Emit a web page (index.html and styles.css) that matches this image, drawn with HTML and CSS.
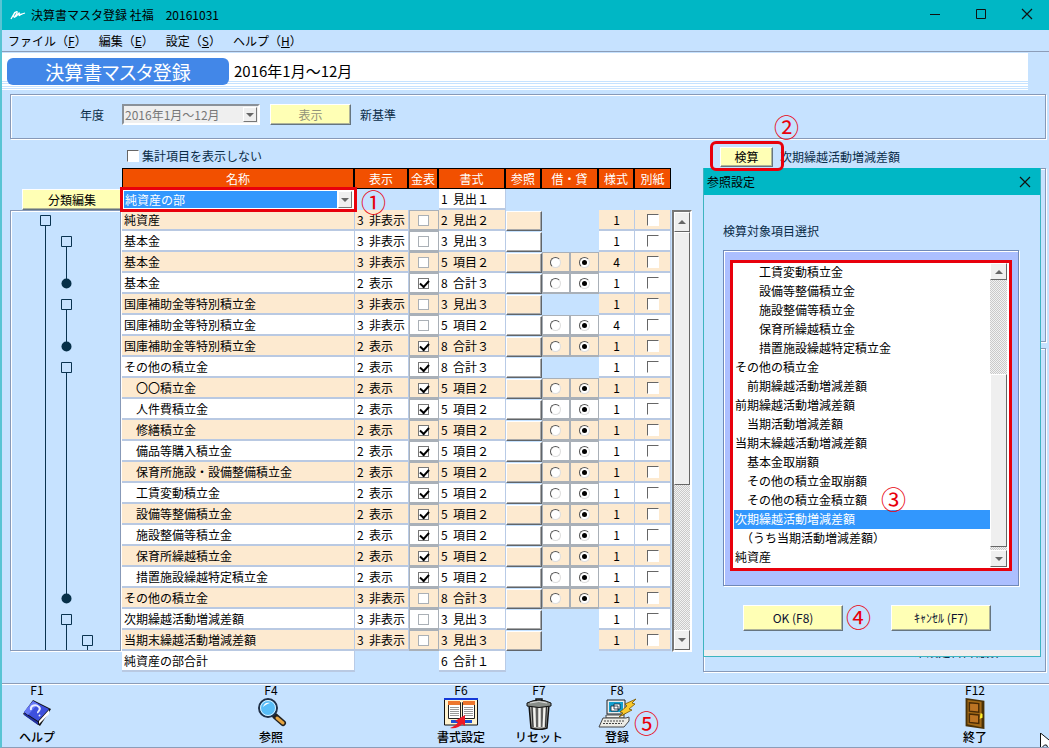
FILE: index.html
```html
<!DOCTYPE html>
<html lang="ja">
<head>
<meta charset="utf-8">
<title>決算書マスタ登録 社福</title>
<link rel="stylesheet" href="styles.css">
</head>
<body>
<div class="window">
  <header class="titlebar">
    <svg class="app-icon" width="16" height="12" viewBox="0 0 16 12"><path d="M1 10 5 3M3 8C4 3 8 1 7 4S3 9 5 8 8 5 9 4 8 8 10 6 11 6 12 5L15 4" fill="none" stroke="#fff" stroke-width="1.3"/></svg>
    <h1 class="app-title">決算書マスタ登録 社福　20161031</h1>
    <div class="window-buttons">
      <button type="button" aria-label="最小化"><svg width="12" height="12" viewBox="0 0 12 12"><path d="M1 6.5h10" stroke="#111"/></svg></button>
      <button type="button" aria-label="最大化"><svg width="12" height="12" viewBox="0 0 12 12"><path d="M1.500 1.500h9v9h-9z" fill="none" stroke="#111"/></svg></button>
      <button type="button" aria-label="閉じる"><svg width="12" height="12" viewBox="0 0 12 12"><path d="M1 1l10 10M11 1L1 11" stroke="#111" stroke-width="1.200"/></svg></button>
    </div>
  </header>

  <nav class="menubar">
    <button type="button">ファイル（<u>F</u>）</button>
    <button type="button">編集（<u>E</u>）</button>
    <button type="button">設定（<u>S</u>）</button>
    <button type="button">ヘルプ（<u>H</u>）</button>
  </nav>

  <div class="heading">
    <h2 class="heading-name">決算書マスタ登録</h2>
    <span class="heading-period">2016年1月～12月</span>
  </div>

  <section class="filter etched">
    <label class="filter-label" for="year">年度</label>
    <span class="combo combo-year">
      <select id="year" disabled><option>2016年1月～12月</option></select>
      <i class="combo-arrow"></i>
    </span>
    <button type="button" class="btn btn-show" disabled>表示</button>
    <span class="filter-note">新基準</span>
  </section>

  <main class="main">
    <section class="items">
      <label class="hide-total"><input type="checkbox" class="sunken-check">集計項目を表示しない</label>
      <div class="items-grid">
        <div class="side">
          <button type="button" class="btn btn-edit">分類編集</button>
          <div class="tree etched">
            <svg width="110" height="439" viewBox="0 0 110 439">
              <g fill="none" stroke="#0a3350">
                <path d="M34.500 15V439M55.500 36V69M55.500 99V132M55.500 162V385M55.500 414V439M76.500 435V439"/>
                <path fill="#c6e2ff" d="M29.500 4.500h10v10h-10zM50.500 25.500h10v10h-10zM50.500 88.500h10v10h-10zM50.500 151.500h10v10h-10zM50.500 403.500h10v10h-10zM71.500 424.500h10v10h-10z"/>
              </g>
              <g fill="#062f48"><circle cx="55.500" cy="72.500" r="5"/><circle cx="55.500" cy="135.500" r="5"/><circle cx="55.500" cy="387.500" r="5"/></g>
            </svg>
          </div>
        </div>
        <table class="items-table">
          <colgroup><col><col class="c-show"><col class="c-amt"><col class="c-fmt"><col class="c-ref"><col class="c-dr"><col class="c-cr"><col class="c-form"><col class="c-form"></colgroup>
          <thead>
            <tr><th>名称</th><th>表示</th><th>金表</th><th>書式</th><th>参照</th><th colspan="2">借・貸</th><th>様式</th><th>別紙</th></tr>
          </thead>
          <tbody id="rows">
            <tr class="group-row">
              <td class="group-cell">
                <span class="combo combo-group">
                  <select aria-label="分類"><option>純資産の部</option></select>
                  <i class="combo-arrow"></i>
                </span>
              </td>
              <td></td><td></td><td class="cell"><span class="code">1</span>見出１</td><td></td><td></td><td></td><td></td><td></td>
            </tr>
          </tbody>
          <tfoot>
            <tr><td class="cell">純資産の部合計</td><td></td><td></td><td class="cell"><span class="code">6</span>合計１</td><td></td><td></td><td></td><td></td><td></td></tr>
          </tfoot>
        </table>
        <div class="scroll scroll-table"><i class="scroll-btn up"></i><i class="scroll-thumb"></i><i class="scroll-track"></i><i class="scroll-btn down"></i></div>
      </div>
      <span class="mark mark-1">①</span>
    </section>

    <section class="check">
      <div class="check-head">
        <button type="button" class="btn btn-check">検算</button>
        <span class="check-target">次期繰越活動増減差額</span>
        <span class="check-ring"></span>
        <span class="mark mark-2">②</span>
      </div>
      <div class="panel panel-top etched"></div>
      <div class="panel panel-bottom etched"><span>未設定科目総数</span><span>0&nbsp; 0</span></div>

      <div class="dialog" role="dialog" aria-labelledby="dlg-title">
        <div class="dialog-title">
          <h3 id="dlg-title">参照設定</h3>
          <button type="button" aria-label="閉じる"><svg width="12" height="12" viewBox="0 0 12 12"><path d="M1 1l10 10M11 1L1 11" stroke="#111" stroke-width="1.200"/></svg></button>
        </div>
        <div class="dialog-body">
          <label class="dialog-label" for="target">検算対象項目選択</label>
          <div class="list-panel">
            <div class="list-frame">
              <select id="target" size="16">
                <option>　　工賃変動積立金</option>
                <option>　　設備等整備積立金</option>
                <option>　　施設整備等積立金</option>
                <option>　　保育所繰越積立金</option>
                <option>　　措置施設繰越特定積立金</option>
                <option>その他の積立金</option>
                <option>　前期繰越活動増減差額</option>
                <option>前期繰越活動増減差額</option>
                <option>　当期活動増減差額</option>
                <option>当期末繰越活動増減差額</option>
                <option>　基本金取崩額</option>
                <option>　その他の積立金取崩額</option>
                <option>　その他の積立金積立額</option>
                <option selected>次期繰越活動増減差額</option>
                <option>　（うち当期活動増減差額）</option>
                <option>純資産</option>
              </select>
              <div class="scroll scroll-list"><i class="scroll-btn up"></i><i class="scroll-track"></i><i class="scroll-thumb"></i><i class="scroll-btn down"></i></div>
            </div>
            <span class="mark mark-3">③</span>
          </div>
          <div class="dialog-actions">
            <button type="button" class="btn btn-dialog">OK (F8)</button>
            <button type="button" class="btn btn-dialog">ｷｬﾝｾﾙ (F7)</button>
            <span class="mark mark-4">④</span>
          </div>
        </div>
      </div>
    </section>
  </main>

  <footer class="keys">
    <div class="key-group">
      <button type="button" class="key"><span>F1</span>
        <svg width="32" height="32" viewBox="0 0 32 32"><path d="M12 2 30 11 19 28 2 16z" fill="#111"/><path d="M12 3 28 11 17 23 3 14z" fill="#3d50dd"/><path d="M12 3 3 14l4 3L17 6z" fill="#6678f5"/><path d="M28 12v4L18 26v-3z" fill="#fff"/><path d="M3 15 17 24v3L3 17z" fill="#2231a0"/><path d="M10 12C9 7 15 6 18 9s-2 4-1 6M18 17l1 1" fill="none" stroke="#e8ecff" stroke-width="2"/></svg>
        <b>ヘルプ</b></button>
      <i></i><i></i>
      <button type="button" class="key"><span>F4</span>
        <svg width="32" height="32" viewBox="0 0 32 32"><path d="M20 18 28 25" stroke="#222" stroke-width="6" stroke-linecap="round"/><path d="M22 20 28 25" stroke="#e6a440" stroke-width="3" stroke-linecap="round"/><circle cx="13" cy="10" r="9" fill="#58bdf7" stroke="#203047" stroke-width="2"/><circle cx="13" cy="10" r="7.500" fill="none" stroke="#d7f1ff"/><path d="M8 9c1-4 4-5 7-4-3 1-5 2-7 4z" fill="#fff"/></svg>
        <b>参照</b></button>
    </div>
    <div class="key-group">
      <i></i>
      <button type="button" class="key"><span>F6</span>
        <svg width="36" height="32" viewBox="0 0 36 32"><path d="M1.500 1h33v26h-33z" fill="#fff3cf" stroke="#111"/><path d="M1 0h34v2H1z" fill="#1438d8"/><path d="M5.500 4.500h12v16h-12zM19.500 4.500h12v16h-12z" fill="#fff" stroke="#222"/><path d="M5 3h12v4H5zM20 3h12v4H20z" fill="#ed762d"/><path d="M7 9.500h9M7 11.500h9M7 13.500h9M7 15.500h9M7 17.500h9M21 9.500h9M21 11.500h9M21 13.500h9M21 15.500h9M21 17.500h9" stroke="#999"/><path d="M8 22h21v3H8z" fill="#1b50d8"/><path d="M22 17v11l-3-2c-2 3-7 5-12 4 5-2 7-4 8-6l-3-1z" fill="#ee1826"/></svg>
        <b>書式設定</b></button>
      <button type="button" class="key"><span>F7</span>
        <svg width="32" height="32" viewBox="0 0 32 32"><path d="M6 7h20l-2 23q-8 3-16 0z" fill="#a7a7a2" stroke="#111" stroke-width="1.500"/><path d="M9 9l1 20M14 9v20M19 9v20M23.500 9l-1 20" stroke="#333" stroke-width="1.200"/><path d="M11 9l1 20M16.500 9v20M21.500 9l-1 20" stroke="#f4f4f0" stroke-width="2"/><path d="M4 5q12-6 24 0v3q-12 3-24 0z" fill="#888d88" stroke="#111"/><path d="M13 3V1h6v2" fill="none" stroke="#111" stroke-width="1.500"/><path d="M7 5q9-3 17 0" stroke="#ddd" fill="none"/></svg>
        <b>リセット</b></button>
      <button type="button" class="key"><span>F8</span>
        <svg width="40" height="32" viewBox="0 0 40 32"><path d="M10 2h18v14H10z" fill="#e8edf0" stroke="#222"/><path d="M12 4h14v10H12z" fill="#139fce"/><path d="M14 8h7v5h-7zM17 6h6v5h-6z" fill="#fff" stroke="#123" stroke-width=".8"/><path d="M9 17h18v3H9z" fill="#f4f4f0" stroke="#444"/><path d="M6 20h23l3-1v4l-5 6H2z" fill="#ecece6" stroke="#444"/><path d="M7 23h20M6 25.500h19" stroke="#444" stroke-dasharray="2 1"/><path d="M39 1 28 6l2 2-7 6 3 1-4 4 13-7-3-1 6-5-3-1z" fill="#fac92b" stroke="#765400" stroke-width=".8"/></svg>
        <b>登録</b></button>
      <span class="mark mark-5">⑤</span>
    </div>
    <div class="key-group key-group-end">
      <i></i><i></i><i></i>
      <button type="button" class="key"><span>F12</span>
        <svg width="32" height="34" viewBox="0 0 32 34"><path d="M6 0 26 3v30L6 30z" fill="#4a3106"/><path d="M8 2 23 4v27L8 28z" fill="#a36a17"/><path d="M10 5 20 6v9L10 14zM10 17l10 1v9L10 26z" fill="#bc7423" stroke="#4a2b05" stroke-width="1.500"/><path d="M22 16l2 1v4l-3 1z" fill="#fff02a"/></svg>
        <b>終了</b></button>
    </div>
  </footer>
  <svg class="cursor" width="9" height="14" viewBox="0 0 9 14"><path d="M.5 0v16l4-4h2l2 4 3-2V9z" fill="#fff" stroke="#111"/></svg>
</div>
<script src="rows.js"></script>
</body>
</html>
```
FILE: styles.css
```css
* { box-sizing: border-box; }
body {
  margin: 0;
  background: #fff;
  color: #000;
  font: 12px/16px "Noto Sans CJK JP", "Liberation Sans", sans-serif;
}
button, select, input { font: inherit; color: inherit; margin: 0; }
button { border: 0; padding: 0; background: none; }
h1, h2, h3 { margin: 0; font-weight: 400; }
.window {
  position: relative;
  background: #c6e2ff;
  border-left: 2px solid #58c4d4;
  border-bottom: 1px solid #8c9db8;
  overflow: hidden;
}

.titlebar {
  display: flex;
  align-items: center;
  gap: 5px;
  height: 30px;
  margin-left: -2px;
  padding-left: 10px;
  background: #00b7c5;
}
.app-title { flex: 1; font-size: 12px; line-height: 28px; }
.window-buttons { display: flex; padding: 0 16px 2px 0; gap: 34px; }
.window-buttons button { width: 12px; height: 12px; line-height: 0; }

.menubar {
  display: flex;
  gap: 12px;
  height: 22px;
  padding-left: 6px;
  border-bottom: 1px solid #8c9db8;
}
.menubar button { line-height: 22px; }

.heading {
  display: flex;
  align-items: flex-start;
  gap: 5px;
  height: 38px;
  margin: 1px 21px 0 0;
  padding: 5px 0 0 5px;
  background: linear-gradient(#fff 28px, #c6e2ff 28px, #c6e2ff 29px, #fff 29px, #fff 30px, #c6e2ff 30px, #c6e2ff 31px, #fff 31px, #fff 33px, #c6e2ff 33px, #c6e2ff 34px, #fff 34px, #fff 35px, #c6e2ff 35px, #c6e2ff 36px, #fff 36px, #fff 37px, #c6e2ff 37px);
}
.heading-name {
  width: 222px;
  border-radius: 6px;
  background: #4287e8;
  color: #fff;
  font-size: 19px;
  line-height: 27px;
  text-align: center;
  font-feature-settings: "palt";
}
.heading-period { font-size: 15px; line-height: 26px; }

.etched { border: 1px solid #8799b8; box-shadow: 1px 1px 0 #fff, inset 1px 1px 0 #fff; }

.filter {
  display: flex;
  align-items: center;
  height: 45px;
  margin: 3px 3px 0 8px;
  padding: 0 0 4px 69px;
}
.filter-label { width: 42px; color: #0a2c48; }
.filter-note { margin-left: 9px; color: #0a2c48; }

.combo { position: relative; display: block; }
.combo select {
  appearance: none;
  display: block;
  width: 100%;
  height: 100%;
  border: 0;
  border-radius: 0;
  padding: 0 2px;
  opacity: 1;
}
.combo-arrow {
  position: absolute;
  top: 1px;
  right: 1px;
  bottom: 1px;
  width: 14px;
  display: grid;
  place-items: center;
  background: #efefef;
  border: 1px solid;
  border-color: #fff #777 #777 #fff;
  pointer-events: none;
}
.combo-arrow::before, .scroll-btn::before {
  content: "";
  border: 4px solid transparent;
  border-top-color: #666;
  border-bottom: 0;
}
.combo-year {
  width: 138px;
  height: 21px;
  border: 2px solid;
  border-color: #8a9199 #fff #fff #8a9199;
  background: #efefef;
}
.combo-year select { padding: 0 1px; background: #efefef; color: #777; }

.btn {
  background: #ffffb5;
  border: 1px solid;
  border-color: #fff #667580 #667580 #fff;
  box-shadow: inset -1px -1px 0 #b0b59a;
  line-height: 18px;
}
.btn-show { width: 81px; height: 21px; margin-left: 10px; color: #92947a; }

.main { display: flex; gap: 11px; padding: 8px 3px 11px 8px; }
.items { position: relative; flex: 1; min-width: 0; }
.hide-total { display: flex; align-items: center; gap: 3px; height: 18px; margin: 0 0 3px 117px; color: #0a2c48; }
.sunken-check {
  appearance: none;
  width: 12px;
  height: 12px;
  background: #fff;
  border: 1px solid;
  border-color: #666 #fff #fff #666;
}
.items-grid { display: grid; grid-template-columns: 112px minmax(0, 1fr) 21px; }
.side { display: flex; flex-direction: column; padding-top: 21px; }
.btn-edit { height: 21px; margin-left: 12px; border-right-color: #ffffb5; }
.tree { width: 111px; height: 441px; line-height: 0; }

.items-table { width: 100%; table-layout: fixed; border-collapse: separate; border-spacing: 0; }
.c-show { width: 54px; }
.c-amt { width: 30px; }
.c-fmt { width: 67px; }
.c-ref { width: 36px; }
.c-dr { width: 28px; }
.c-cr { width: 29px; }
.c-form { width: 36px; }
.items-table th {
  height: 21px;
  padding: 0;
  border: 1px solid #000;
  border-left-width: 0;
  border-right-width: 2px;
  background: #f25000;
  color: #fff;
  font-weight: 400;
  line-height: 19px;
}
.items-table th:first-child { border-left-width: 1px; }
.items-table th:last-child { border-right-width: 1px; }
.items-table td { height: 21px; padding: 0; line-height: 18px; white-space: nowrap; }
.items-table .cell { padding: 0 2px; background: #fff; border-right: 1px solid #b9cbe6; border-bottom: 2px solid #b9c9e2; }
.items-table .mid { text-align: center; }
.items-table .boxed { background: #fff; border: 1px solid #a9b0b8; border-bottom-width: 2px; line-height: 0; text-align: center; }
.ref { display: block; width: 100%; height: 20px; background: #fff; border: 1px solid; border-color: #fff #60656a #60656a #fff; box-shadow: inset -1px -1px 0 #aaa; }
.items-table .odd .cell, .items-table .odd .boxed, .odd .ref { background: #fdead0; }
.code { display: inline-block; width: 12px; }
.cell .sunken-check { display: block; margin: 0 auto; }
.amt {
  appearance: none;
  display: block;
  width: 11px;
  height: 11px;
  margin: 0 auto;
  background: #fff;
  border: 1px solid #aab0b6;
}
.amt:checked { border-color: #777; }
.amt:checked::before {
  content: "";
  display: block;
  width: 7px;
  height: 4px;
  margin: 1px;
  border: solid #000;
  border-width: 0 0 2px 2px;
  transform: rotate(-48deg);
}
.radio {
  appearance: none;
  display: grid;
  place-items: center;
  width: 11px;
  height: 11px;
  margin: 0 auto;
  border: 1px solid;
  border-color: #555 #ddd #ddd #555;
  border-radius: 50%;
  background: #fff;
}
.radio:checked::before { content: ""; width: 5px; height: 5px; border-radius: 50%; background: #000; }

.combo-group {
  height: 21px;
  border: 1px solid #777;
  background: #fff;
  outline: 3px solid #e8000c;
  outline-offset: -1px;
  z-index: 1;
}
.combo-group select {
  border: solid #fff;
  border-width: 1px 17px 1px 1px;
  padding: 0 1px;
  background: #3297fd;
  color: #fff;
}
.combo-group .combo-arrow { right: 2px; }

.scroll {
  display: flex;
  flex-direction: column;
  background: repeating-conic-gradient(#c9c9c9 0 25%, #f2f2f2 0 50%) 0 0 / 2px 2px;
}
.scroll-btn, .scroll-thumb { background: #efefef; border: 1px solid; border-color: #fff #666 #666 #fff; }
.scroll-btn { display: grid; place-items: center; flex: none; }
.scroll-btn.up::before { transform: rotate(180deg); }
.scroll-table { margin: 42px 0 20px 1px; border: 2px solid; border-color: #777 #fff #fff #777; }
.scroll-table .scroll-btn { height: 20px; }
.scroll-table .scroll-thumb { flex: 251; }
.scroll-table .scroll-track { flex: 145; }
.scroll-list { width: 17px; }
.scroll-list .scroll-btn { height: 17px; }
.scroll-list .scroll-track { flex: 95; }
.scroll-list .scroll-thumb { flex: 172; margin-bottom: 3px; }

.check { position: relative; flex: none; width: 343px; display: flex; flex-direction: column; }
.check-head { position: relative; display: flex; align-items: center; height: 21px; padding: 0 0 2px 17px; }
.btn-check { width: 53px; height: 20px; }
.check-target { margin-left: 7px; color: #0a2c48; }
.check-ring { position: absolute; left: 7px; top: -6px; width: 74px; height: 30px; border: 3px solid #e8000c; border-radius: 6px; z-index: 3; }
.panel-top { height: 174px; }
.panel-bottom { flex: 1; margin-top: 6px; display: flex; align-items: flex-end; justify-content: flex-end; gap: 20px; padding: 0 8px 11px 0; color: #0a2c48; }

.dialog { position: absolute; top: 21px; left: 0; right: 5px; border: 1px solid #3db4c0; background: #c6e2ff; border-top: 0; }
.dialog-title { display: flex; align-items: center; justify-content: space-between; height: 27px; padding: 0 9px 0 3px; background: #00b7c5; }
.dialog-title h3 { font-size: 12px; }
.dialog-title button { width: 12px; height: 12px; line-height: 0; }
.dialog-body { padding: 28px 21px 19px 19px; border-bottom: 6px solid #efefef; }
.dialog-label { display: block; color: #0a2c48; }
.list-panel { position: relative; margin-top: 11px; padding: 9px 6px 14px 6px; background: #acbfff; border: 1px solid #7089b8; box-shadow: 1px 1px 0 #fff, inset 1px 1px 0 #fff; }
.list-frame { display: flex; border: 3px solid #e8000c; background: #fff; padding: 0 2px 1px 1px; }
.list-frame select {
  flex: 1;
  min-width: 0;
  height: 304px;
  padding: 0;
  border: 0;
  outline: 0;
  background: #fff;
  overflow: hidden;
  scrollbar-width: none;
}
.list-frame option { height: 19px; min-height: 19px; padding: 0 1px; line-height: 19px; }
.list-frame option:checked { background: #3297fd linear-gradient(#3297fd, #3297fd); color: #fff; }
.dialog-actions { position: relative; display: flex; gap: 48px; padding: 19px 0 0 20px; }
.btn-dialog { width: 100px; height: 26px; line-height: 22px; color: #0a1030; }

.mark { position: absolute; z-index: 4; color: #e8000c; font-size: 25px; line-height: 26px; }
.mark-1 { left: 351px; top: 41px; }
.mark-2 { left: 71px; top: -34px; }
.mark-3 { left: 157px; top: 234px; }
.mark-4 { left: 123px; top: 17px; }
.mark-5 { right: -7px; top: 25px; }

.keys { display: flex; gap: 42px; height: 64px; padding-right: 39px; border-top: 1px solid #8c9db8; box-shadow: inset 0 1px 0 #fff; }
.key-group { position: relative; display: grid; grid-template-columns: repeat(4, 70px); gap: 8px; }
.key-group-end { margin-left: auto; }
.key { display: flex; flex-direction: column; align-items: center; }
.key span { height: 14px; line-height: 12px; }
.key svg { height: 32px; }
.key b { font-weight: 500; line-height: 14px; }
.cursor { position: absolute; right: 0; bottom: 0; }
```
FILE: rows.js
```js
// 名称, 表示, 金表, 書式, 借・貸の有無, 様式
const rows = [
  ["純資産", "3 非表示", 0, "2 見出２", 0, 1],
  ["基本金", "3 非表示", 0, "3 見出３", 0, 1],
  ["基本金", "3 非表示", 0, "5 項目２", 1, 4],
  ["基本金", "2 表示", 1, "8 合計３", 1, 1],
  ["国庫補助金等特別積立金", "3 非表示", 0, "3 見出３", 0, 1],
  ["国庫補助金等特別積立金", "3 非表示", 0, "5 項目２", 1, 4],
  ["国庫補助金等特別積立金", "2 表示", 1, "8 合計３", 1, 1],
  ["その他の積立金", "2 表示", 1, "8 合計３", 0, 1],
  ["　〇〇積立金", "2 表示", 1, "5 項目２", 1, 1],
  ["　人件費積立金", "2 表示", 1, "5 項目２", 1, 1],
  ["　修繕積立金", "2 表示", 1, "5 項目２", 1, 1],
  ["　備品等購入積立金", "2 表示", 1, "5 項目２", 1, 1],
  ["　保育所施設・設備整備積立金", "2 表示", 1, "5 項目２", 1, 1],
  ["　工賃変動積立金", "2 表示", 1, "5 項目２", 1, 1],
  ["　設備等整備積立金", "2 表示", 1, "5 項目２", 1, 1],
  ["　施設整備等積立金", "2 表示", 1, "5 項目２", 1, 1],
  ["　保育所繰越積立金", "2 表示", 1, "5 項目２", 1, 1],
  ["　措置施設繰越特定積立金", "2 表示", 1, "5 項目２", 1, 1],
  ["その他の積立金", "3 非表示", 0, "8 合計３", 1, 1],
  ["次期繰越活動増減差額", "3 非表示", 0, "3 見出３", 0, 1],
  ["当期末繰越活動増減差額", "3 非表示", 0, "3 見出３", 0, 1]
];
const coded = (text) => {
  const [code, label] = text.split(" ");
  return `<td class="cell"><span class="code">${code}</span>${label}</td>`;
};
const html = rows.map(([name, show, amt, fmt, side, form], i) => {
  const sides = side
    ? `<td class="boxed"><input type="radio" class="radio" name="side${i}" aria-label="借"></td>
       <td class="boxed"><input type="radio" class="radio" name="side${i}" aria-label="貸" checked></td>`
    : "<td></td><td></td>";
  return `<tr class="${i % 2 ? "even" : "odd"}"><td class="cell">${name}</td>${coded(show)}
    <td class="boxed"><input type="checkbox" class="amt" aria-label="金表"${amt ? " checked" : ""}></td>
    ${coded(fmt)}<td><button type="button" class="ref" aria-label="参照"></button></td>${sides}
    <td class="cell mid">${form}</td>
    <td class="cell"><input type="checkbox" class="sunken-check" aria-label="別紙"></td></tr>`;
}).join("");
document.getElementById("rows").insertAdjacentHTML("beforeend", html);
```
